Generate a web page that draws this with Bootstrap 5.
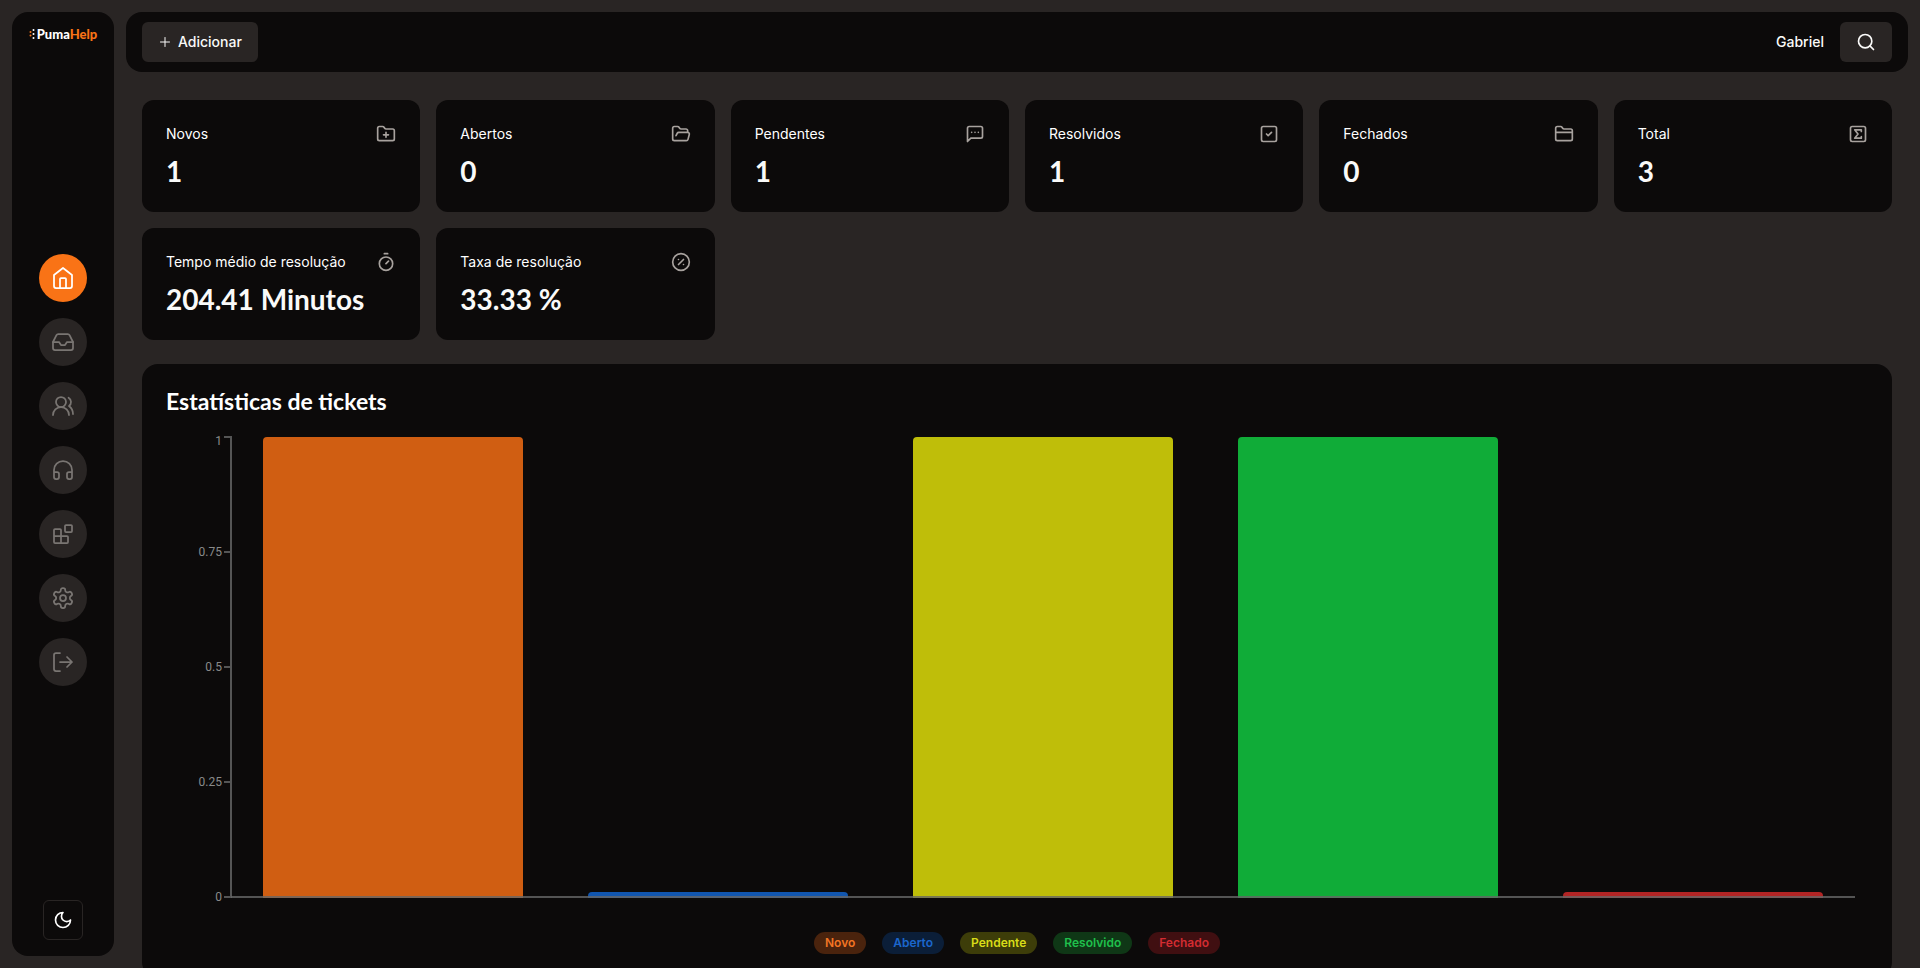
<!DOCTYPE html>
<html lang="pt-BR" data-bs-theme="dark">
<head>
<meta charset="utf-8">
<meta name="viewport" content="width=device-width, initial-scale=1">
<title>PumaHelp</title>
<link href="https://cdn.jsdelivr.net/npm/bootstrap@5.3.0/dist/css/bootstrap.min.css" rel="stylesheet">
<style>
:root{--page:#292524;--panel:#0c0a0a;--ink:#fafaf9;--muted:#a8a29e;--axis:#555;--accent:#f97316}
body{background:var(--page);color:var(--ink);font-family:Inter,"Liberation Sans",sans-serif;font-size:14px;line-height:20px}
svg{fill:none;stroke:currentColor;stroke-width:2;stroke-linecap:round;stroke-linejoin:round;flex-shrink:0;display:block}
.shell{height:100vh;padding:12px;gap:12px}
.side{width:102px;background:var(--panel);border-radius:16px;padding:12px 0 16px;flex-shrink:0}
.side nav{margin-bottom:4px}
.brand{font:900 13px/20px Lato,Inter,sans-serif;color:#fff;text-decoration:none;gap:2px}
.brand svg{stroke:none}
.brand b{color:var(--accent);font-weight:900}
.round-link{width:48px;height:48px;border-radius:50%;background:var(--page);color:#797572}
.round-link svg{stroke-width:1.75}
.round-link.active{background:var(--accent);color:#fff}
.btn-theme{width:40px;height:40px;border:1px solid var(--page);border-radius:6px;color:#fff;padding:0}
.topbar{background:var(--panel);border-radius:16px;height:60px;padding:0 16px;flex-shrink:0}
.user-name{font-weight:500}
.btn-dark-soft{--bs-btn-bg:var(--page);--bs-btn-color:var(--ink);--bs-btn-hover-bg:#44403c;--bs-btn-hover-color:#fff;height:40px;border:0;border-radius:6px;font-size:14px;font-weight:500;line-height:20px;padding:0 16px;gap:6px}
.btn-dark-soft .plus{stroke-width:1}
.scroller{min-height:0;margin-bottom:-12px;padding:28px 16px 12px;overflow-y:auto;scrollbar-width:none}
.scroller::-webkit-scrollbar{display:none}
.stats{display:grid;grid-template-columns:repeat(6,minmax(0,1fr));gap:16px}
.stat{background:var(--panel);border:0;border-radius:12px;padding:24px;gap:10px}
.stat h2{font-size:14px;font-weight:400;line-height:20px;margin:0;white-space:nowrap}
.stat svg{color:var(--muted)}
.stat p{font:700 28px/34px Lato,Inter,sans-serif;margin:0;white-space:nowrap}
.chart-card{background:var(--panel);border:0;border-radius:16px;padding:24px;margin-top:24px}
.chart-card h1{font:700 23px/26px Lato,Inter,sans-serif;margin:0 0 22px}
.chart{height:462px;padding-right:13px}
.scale{width:65px;padding-right:1px;font:12px/10px Roboto,Inter,sans-serif;color:#8a8a8a}
.scale span{height:2px;display:flex;align-items:center;justify-content:flex-end;gap:2px}
.scale span::after{content:"";width:6px;height:2px;background:var(--axis)}
.scale span:first-child{align-items:flex-start}
.plot{position:relative;padding-top:1px}
.plot::before{content:"";position:absolute;inset:0 auto 0 -1px;width:2px;background:var(--axis)}
.plot::after{content:"";position:absolute;inset:auto 0 0 0;height:2px;background:#666c}
.slot{width:80%;border-radius:4px 4px 0 0}
.novo{background:#d05e12}.aberto{background:#1156b0}.pendente{background:#bfbe09}.resolvido{background:#10ac38}.fechado{background:#b32424}
.legend-row{gap:16px;margin-top:34px}
.legend-row .badge{font-size:12px;font-weight:600;line-height:16px;padding:3px 11px}
.t-novo{color:#f27524;background:#4a230d}.t-aberto{color:#1b66cc;background:#0b1e38}.t-pendente{color:#d9dc18;background:#3d3d09}.t-resolvido{color:#1fc04c;background:#0f3716}.t-fechado{color:#d32c31;background:#400f11}
</style>
</head>
<body>
<div class="shell d-flex">
  <aside class="side d-flex flex-column align-items-center justify-content-between">
    <a class="brand d-flex align-items-center" href="#">
      <svg width="6" height="12" viewBox="0 0 6 12"><g fill="#fff"><circle cx="4.500" cy="2" r="1"/><circle cx="4.500" cy="6" r="1"/><circle cx="4.500" cy="10" r="1"/></g><g fill="#f97316"><circle cx="1.500" cy="4" r="1"/><circle cx="1.500" cy="7.500" r="1"/></g></svg>
      <span>Puma<b>Help</b></span></a>
    <nav class="d-flex flex-column gap-3" aria-label="Principal">
      <a class="round-link active d-flex align-items-center justify-content-center" href="#" aria-label="Início"><svg width="24" height="24" viewBox="0 0 24 24"><path d="m3 9 9-7 9 7v11a2 2 0 0 1-2 2H5a2 2 0 0 1-2-2z"/><path d="M9 22v-9a1 1 0 0 1 1-1h4a1 1 0 0 1 1 1v9"/></svg></a>
      <a class="round-link d-flex align-items-center justify-content-center" href="#" aria-label="Entrada"><svg width="24" height="24" viewBox="0 0 24 24"><path d="M22 12h-6l-2 3h-4l-2-3H2"/><path d="M5.450 5.110 2 12v6a2 2 0 0 0 2 2h16a2 2 0 0 0 2-2v-6l-3.450-6.890A2 2 0 0 0 16.760 4H7.240a2 2 0 0 0-1.790 1.110z"/></svg></a>
      <a class="round-link d-flex align-items-center justify-content-center" href="#" aria-label="Usuários"><svg width="24" height="24" viewBox="0 0 24 24"><path d="M18 21a8 8 0 0 0-16 0"/><circle cx="10" cy="8" r="5"/><path d="M22 20c0-3.370-2-6.500-4-8a5 5 0 0 0-.450-8.300"/></svg></a>
      <a class="round-link d-flex align-items-center justify-content-center" href="#" aria-label="Atendentes"><svg width="24" height="24" viewBox="0 0 24 24"><path d="M3 14h3a2 2 0 0 1 2 2v3a2 2 0 0 1-2 2H5a2 2 0 0 1-2-2v-7a9 9 0 0 1 18 0v7a2 2 0 0 1-2 2h-1a2 2 0 0 1-2-2v-3a2 2 0 0 1 2-2h3"/></svg></a>
      <a class="round-link d-flex align-items-center justify-content-center" href="#" aria-label="Módulos"><svg width="24" height="24" viewBox="0 0 24 24"><rect width="7" height="7" x="14" y="3" rx="1"/><path d="M10 21V8a1 1 0 0 0-1-1H4a1 1 0 0 0-1 1v12a1 1 0 0 0 1 1h12a1 1 0 0 0 1-1v-5a1 1 0 0 0-1-1H3"/></svg></a>
      <a class="round-link d-flex align-items-center justify-content-center" href="#" aria-label="Configurações"><svg width="24" height="24" viewBox="0 0 24 24"><path d="M12.220 2h-.440a2 2 0 0 0-2 2v.180a2 2 0 0 1-1 1.730l-.430.250a2 2 0 0 1-2 0l-.150-.080a2 2 0 0 0-2.730.730l-.220.380a2 2 0 0 0 .730 2.730l.150.100a2 2 0 0 1 1 1.720v.510a2 2 0 0 1-1 1.740l-.150.090a2 2 0 0 0-.730 2.730l.220.380a2 2 0 0 0 2.730.730l.150-.080a2 2 0 0 1 2 0l.430.250a2 2 0 0 1 1 1.730V20a2 2 0 0 0 2 2h.440a2 2 0 0 0 2-2v-.180a2 2 0 0 1 1-1.730l.430-.250a2 2 0 0 1 2 0l.150.080a2 2 0 0 0 2.730-.730l.220-.390a2 2 0 0 0-.730-2.730l-.150-.080a2 2 0 0 1-1-1.740v-.500a2 2 0 0 1 1-1.740l.150-.090a2 2 0 0 0 .730-2.730l-.220-.380a2 2 0 0 0-2.730-.730l-.150.080a2 2 0 0 1-2 0l-.430-.250a2 2 0 0 1-1-1.730V4a2 2 0 0 0-2-2z"/><circle cx="12" cy="12" r="3"/></svg></a>
      <a class="round-link d-flex align-items-center justify-content-center" href="#" aria-label="Sair"><svg width="24" height="24" viewBox="0 0 24 24"><path d="M9 21H5a2 2 0 0 1-2-2V5a2 2 0 0 1 2-2h4M16 17l5-5-5-5M21 12H9"/></svg></a>
    </nav>
    <button class="btn btn-theme d-flex align-items-center justify-content-center" type="button" aria-label="Alternar tema"><svg width="20" height="20" viewBox="0 0 24 24"><path d="M12 3a6 6 0 0 0 9 9 9 9 0 1 1-9-9Z"/></svg></button>
  </aside>
  <div class="d-flex flex-column flex-grow-1">
    <header class="topbar d-flex align-items-center justify-content-between">
      <button class="btn btn-dark-soft d-flex align-items-center" type="button"><svg class="plus" width="14" height="14" viewBox="0 0 14 14"><path d="M7 2.500v9M2.500 7h9"/></svg>Adicionar</button>
      <div class="d-flex align-items-center gap-3"><span class="user-name">Gabriel</span>
        <button class="btn btn-dark-soft" type="button" aria-label="Buscar"><svg width="20" height="20" viewBox="0 0 24 24"><circle cx="11" cy="11" r="8"/><path d="m21 21-4.300-4.300"/></svg></button></div>
    </header>
    <main class="scroller flex-grow-1">
      <section class="stats" aria-label="Resumo">
        <article class="stat card"><div class="d-flex justify-content-between"><h2>Novos</h2><svg width="20" height="20" viewBox="0 0 24 24"><path d="M12 10v6M9 13h6M20 20a2 2 0 0 0 2-2V8a2 2 0 0 0-2-2h-7.900a2 2 0 0 1-1.690-.900L9.600 3.900A2 2 0 0 0 7.930 3H4a2 2 0 0 0-2 2v13a2 2 0 0 0 2 2Z"/></svg></div><p>1</p></article>
        <article class="stat card"><div class="d-flex justify-content-between"><h2>Abertos</h2><svg width="20" height="20" viewBox="0 0 24 24"><path d="m6 14 1.500-2.900A2 2 0 0 1 9.240 10H20a2 2 0 0 1 1.940 2.500l-1.540 6a2 2 0 0 1-1.950 1.500H4a2 2 0 0 1-2-2V5a2 2 0 0 1 2-2h3.900a2 2 0 0 1 1.690.900l.810 1.200a2 2 0 0 0 1.670.900H18a2 2 0 0 1 2 2v2"/></svg></div><p>0</p></article>
        <article class="stat card"><div class="d-flex justify-content-between"><h2>Pendentes</h2><svg width="20" height="20" viewBox="0 0 24 24"><path d="M21 15a2 2 0 0 1-2 2H7l-4 4V5a2 2 0 0 1 2-2h14a2 2 0 0 1 2 2zM8 10h.010M12 10h.010M16 10h.010"/></svg></div><p>1</p></article>
        <article class="stat card"><div class="d-flex justify-content-between"><h2>Resolvidos</h2><svg width="20" height="20" viewBox="0 0 24 24"><rect width="18" height="18" x="3" y="3" rx="2"/><path d="m9 12 2 2 4-4"/></svg></div><p>1</p></article>
        <article class="stat card"><div class="d-flex justify-content-between"><h2>Fechados</h2><svg width="20" height="20" viewBox="0 0 24 24"><path d="M20 20a2 2 0 0 0 2-2V8a2 2 0 0 0-2-2h-7.900a2 2 0 0 1-1.690-.900L9.600 3.900A2 2 0 0 0 7.930 3H4a2 2 0 0 0-2 2v13a2 2 0 0 0 2 2ZM2 10h20"/></svg></div><p>0</p></article>
        <article class="stat card"><div class="d-flex justify-content-between"><h2>Total</h2><svg width="20" height="20" viewBox="0 0 24 24"><rect width="18" height="18" x="3" y="3" rx="2"/><path d="M16 8.900V7H8l4 5-4 5h8v-1.900"/></svg></div><p>3</p></article>
        <article class="stat card"><div class="d-flex justify-content-between"><h2>Tempo médio de resolução</h2><svg width="20" height="20" viewBox="0 0 24 24"><path d="M10 2h4M12 14l3-3"/><circle cx="12" cy="14" r="8"/></svg></div><p>204.41 Minutos</p></article>
        <article class="stat card"><div class="d-flex justify-content-between"><h2>Taxa de resolução</h2><svg width="20" height="20" viewBox="0 0 24 24"><circle cx="12" cy="12" r="10"/><path d="m15 9-6 6M9 9h.010M15 15h.010"/></svg></div><p>33.33 %</p></article>
      </section>
      <section class="chart-card card">
        <h1>Estatísticas de tickets</h1>
        <div class="chart d-flex">
          <div class="scale d-flex flex-column justify-content-between"><span>1</span><span>0.75</span><span>0.5</span><span>0.25</span><span>0</span></div>
          <div class="plot d-flex flex-grow-1">
            <div class="col d-flex align-items-end justify-content-center"><div class="slot novo" style="height:100%"></div></div>
            <div class="col d-flex align-items-end justify-content-center"><div class="slot aberto" style="height:6px"></div></div>
            <div class="col d-flex align-items-end justify-content-center"><div class="slot pendente" style="height:100%"></div></div>
            <div class="col d-flex align-items-end justify-content-center"><div class="slot resolvido" style="height:100%"></div></div>
            <div class="col d-flex align-items-end justify-content-center"><div class="slot fechado" style="height:6px"></div></div>
          </div>
        </div>
        <div class="legend-row d-flex justify-content-center"><span class="badge rounded-pill t-novo">Novo</span><span class="badge rounded-pill t-aberto">Aberto</span><span class="badge rounded-pill t-pendente">Pendente</span><span class="badge rounded-pill t-resolvido">Resolvido</span><span class="badge rounded-pill t-fechado">Fechado</span></div>
      </section>
    </main>
  </div>
</div>
<script src="https://cdn.jsdelivr.net/npm/bootstrap@5.3.0/dist/js/bootstrap.bundle.min.js"></script>
</body>
</html>
